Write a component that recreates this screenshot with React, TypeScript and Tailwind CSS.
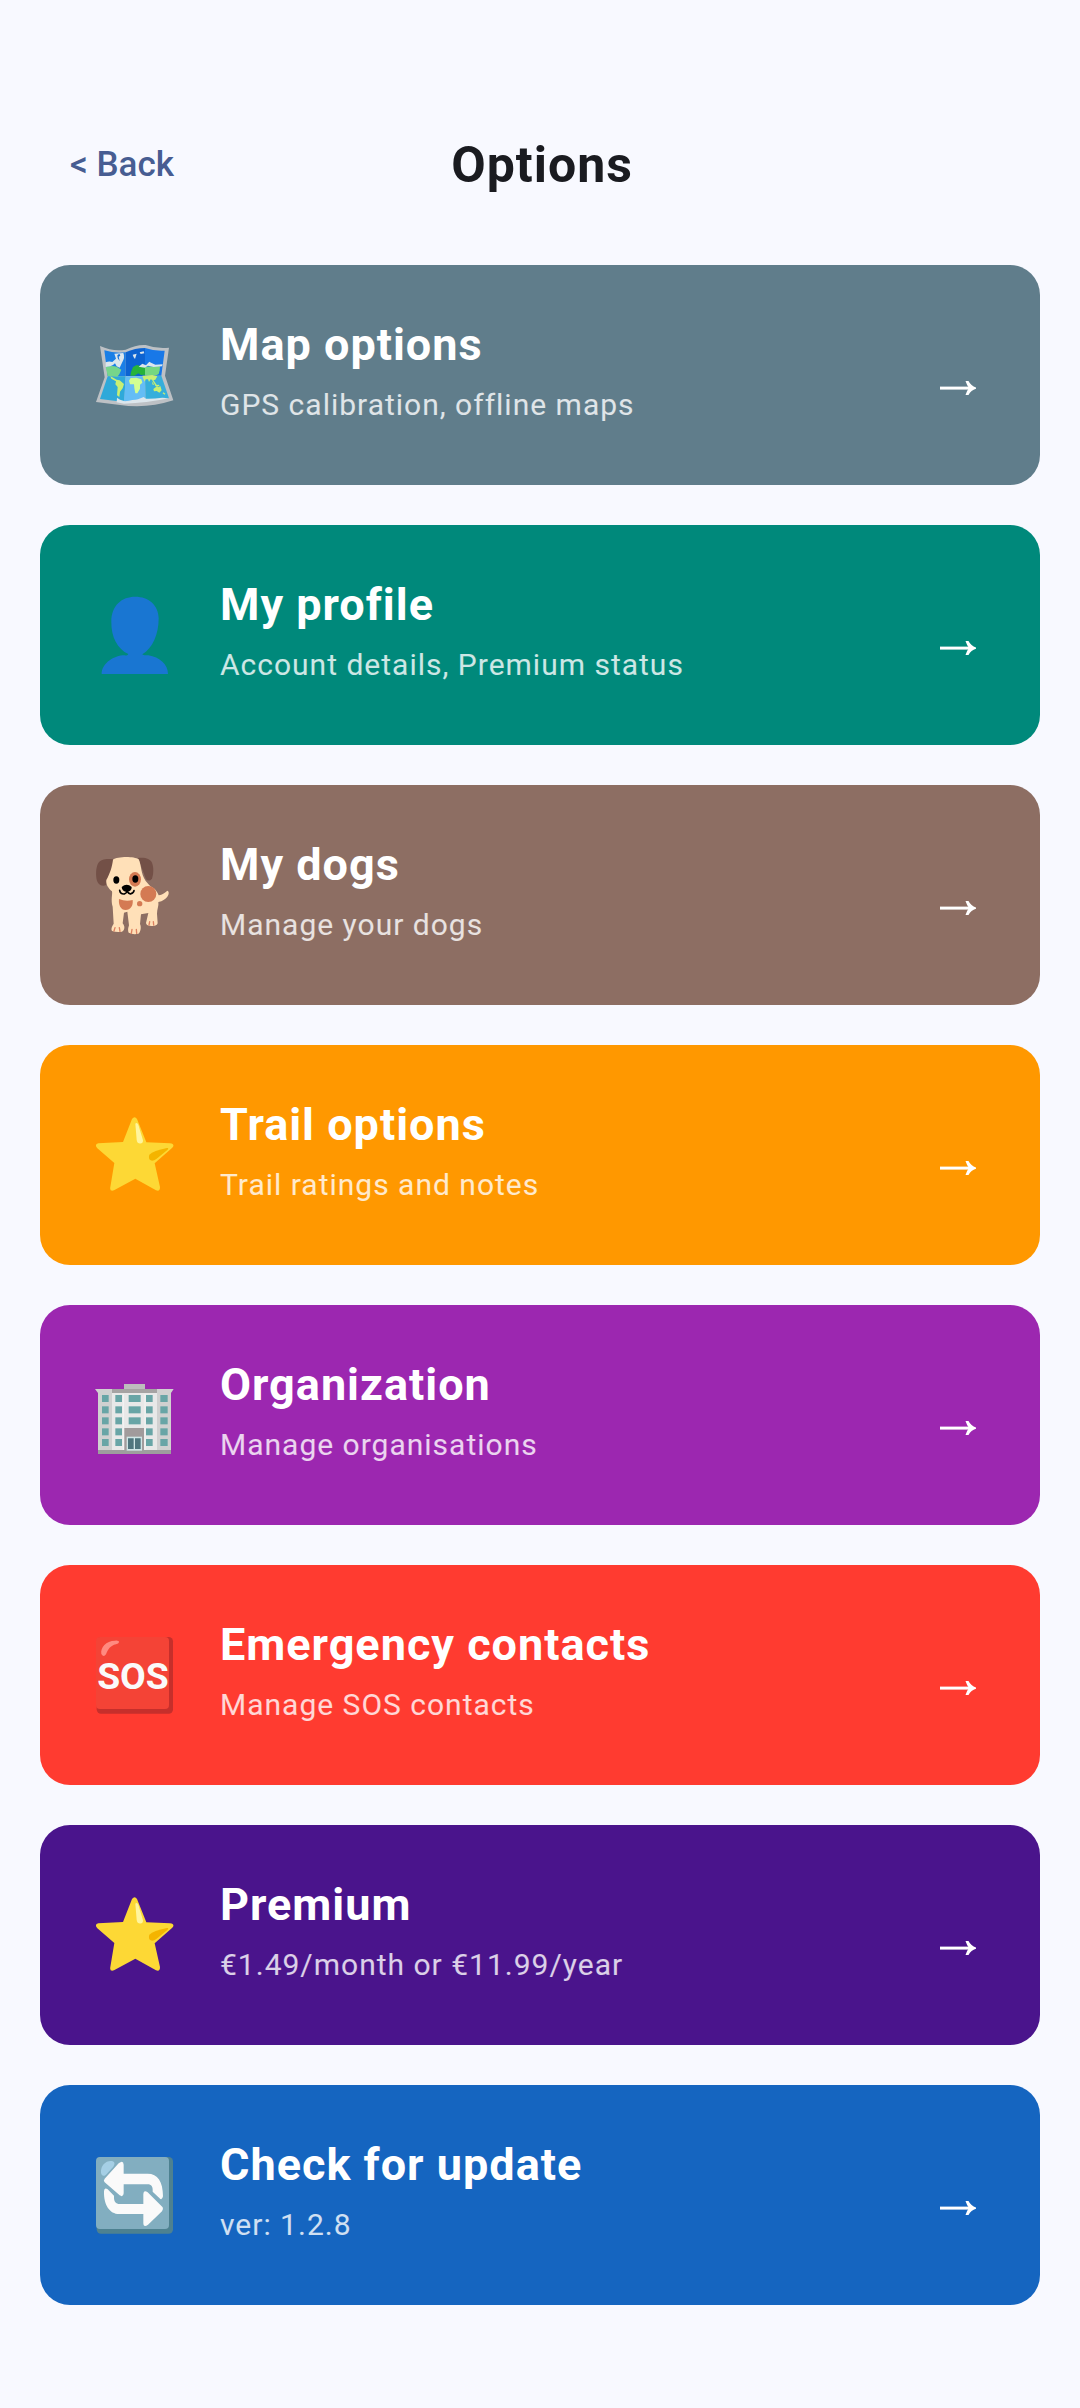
import type { ReactNode } from 'react'

type Option = {
  title: string
  subtitle: string
  color: string
  icon: ReactNode
}

function MapIcon() {
  return (
    <svg viewBox="45 30 240 240" className="size-20" aria-hidden="true">
      <path d="M60 63 Q98 80 137 74 Q170 58 197 60 Q230 72 267 68 L255 152 L280 226 Q200 252 120 240 L48 231 L74 157Z" fill="#bdc1c5" />
      <path d="M73 76 Q105 86 137 82 V154 L83 154Z" fill="#1a7fe6" />
      <path d="M137 82 Q165 69 195 69 V153 H137Z" fill="#0d63d1" />
      <path d="M195 69 Q225 79 254 77 L244 152 H195Z" fill="#1878e8" />
      <path d="M83 154 H137 L133 231 L60 222Z" fill="#2fa9d9" />
      <path d="M137 154 H195 L197 226 Q165 224 132 231Z" fill="#64bdf5" />
      <path d="M195 153 L244 152 L267 220 L197 226Z" fill="#36aedb" />
      <path d="M77 125 Q98 121 110 125 L124 134 L118 148 L112 155 L98 154 L83 153Z" fill="#76d58b" />
      <path d="M77 112 Q88 107 97 111 L108 101 L103 86 L130 84 Q136 97 126 113 L119 128 L110 124 L105 115 L99 120 L91 124 L77 126Z" fill="#dce6ec" />
      <path d="M118 86 L121 92 L116 95 L119 109 L113 99 L112 91Z" fill="#1372db" />
      <path d="M158 89 l12-3 -5 16 -4-5Z M179 82 l12-3 2 6 -11 2Z" fill="#dce6ec" />
      <path d="M153 141 L159 126 L170 120 L187 124 L195 125 V149 L183 150 L175 145 L164 152 L151 152Z" fill="#27b33a" />
      <path d="M195 125 L240 124 L239 136 L236 147 L229 151 L195 150Z" fill="#75d781" />
      <path d="M176 125 L187 116 L198 121 L208 110 L213 113 L226 119 L248 118 L246 124 L221 126 L204 122 L194 128Z" fill="#dce6ec" />
      <path d="M91 154 L100 158 L110 164 L119 166 L132 177 L128 190 L120 200 L118 216 L111 211 L113 186 L106 178 L108 169 L94 161Z" fill="#c8ef73" />
      <path d="M147 167 L152 159 L169 158 L184 163 L187 173 L180 179 L180 191 L172 205 L166 205 L163 189 L162 178 L150 178Z" fill="#d2ff91" />
      <path d="M187 152 L217 150 L232 154 L226 164 L219 166 L212 163 L207 171 L204 163 L197 163 L194 170 L190 161Z M215 169 l8 10 -5 0Z M227 179 l11 2 0 3 -12-1Z M220 192 L231 184 L236 187 L241 183 L245 196 L238 203 L230 198 L222 199Z" fill="#c8ef73" />
      <path d="M218 165 L229 182 L237 181 M249 203 L255 208" fill="none" stroke="#c8ef73" strokeWidth="4" />
      <path d="M111 218 l9 6 15 5 Q160 225 174 223 l17-7 7 5 Q218 222 247 218 L267 220 Q199 234 132 236 L110 232Z" fill="#dce6ec" />
    </svg>
  )
}

function PersonIcon() {
  return (
    <svg viewBox="45 30 240 240" className="size-20" aria-hidden="true">
      <path
        d="M166 35 C205 35 236 60 236 100 C236 148 218 190 187 208 C190 212 197 211 205 211 C239 216 264 239 264 267 H65 C65 239 94 215 128 211 C136 211 142 213 145 207 C113 192 93 156 94 110 C94 61 125 35 166 35Z"
        fill="#1976d2"
      />
    </svg>
  )
}

function DogIcon() {
  return (
    <svg viewBox="45 30 240 240" className="size-20" aria-hidden="true">
      <path d="M99 43 C81 40 62 42 55 54 C47 67 47 93 51 107 C55 120 69 126 78 120 L100 90Z" fill="#735047" />
      <path d="M174 39 C194 36 210 41 216 53 C223 72 219 91 216 101 Q207 111 198 103Z" fill="#735047" />
      <path
        d="M99 44 C111 34 162 33 176 43 C184 58 182 86 197 108 C205 117 209 123 216 127 C228 133 233 144 236 151 C250 150 259 137 263 137 C272 142 262 166 235 171 C237 182 231 193 231 206 L233 235 Q230 244 215 243 Q199 243 198 234 L205 204 L183 208 L180 237 C185 246 181 264 175 266 Q160 270 146 263 Q142 256 147 241 L142 200 L132 203 L128 235 C136 244 134 256 126 260 Q111 263 96 258 Q91 251 101 236 L98 185 C92 165 98 148 96 139 C85 130 77 118 79 105 C91 83 96 66 99 44Z"
        fill="#ffe0b8"
      />
      <ellipse cx="165" cy="103" rx="18" ry="22" fill="#d47a53" />
      <circle cx="205" cy="147" r="24" fill="#d47a53" />
      <circle cx="179" cy="176" r="8" fill="#d47a53" />
      <path d="M117 162 Q137 171 158 165 C160 182 152 195 137 195 C122 195 115 180 117 162Z" fill="#d47a53" />
      <ellipse cx="109" cy="105" rx="9" ry="11" fill="#000000" />
      <ellipse cx="166" cy="102" rx="9" ry="11" fill="#000000" />
      <path d="M125 126 Q140 113 155 126 Q156 138 141 141 Q126 139 125 126Z" fill="#000000" />
      <path d="M119 136 Q121 148 133 147 Q140 144 141 139 Q147 148 153 146 Q161 144 162 137" fill="none" stroke="#000000" strokeWidth="5" strokeLinecap="round" />
      <path d="M105 248 l-3 10 M118 248 l2 11 M156 253 l-2 12 M169 253 l1 12 M209 230 l-2 10 M220 230 l1 10" stroke="#dd8060" strokeWidth="4" strokeLinecap="round" />
    </svg>
  )
}

function StarIcon() {
  return (
    <svg viewBox="45 30 240 240" className="size-20" aria-hidden="true">
      <path
        d="M156 42 Q164 31 171 42 L199 112 L270 115 Q287 118 276 129 L224 175 L240 246 Q240 261 228 256 L166 221 L102 256 Q88 260 91 246 L103 174 L52 130 Q42 118 55 115 L129 111Z"
        fill="#fdd835"
      />
      <path d="M166 56 Q171 51 175 59 L189 106 Q189 118 177 115 Q171 114 170 104Z" fill="#fff59d" />
      <path d="M208 149 Q220 137 261 129 Q268 128 262 135 L230 161 Q216 172 208 163 Q205 156 208 149Z" fill="#f4b400" />
    </svg>
  )
}

function OfficeIcon() {
  const rows = [75, 109, 142, 175, 207]
  return (
    <svg viewBox="45 15 240 240" className="size-20" aria-hidden="true">
      <path d="M132 42 H195 V57 H132Z" fill="#bdbdbd" />
      <path d="M45 57 H281 L273 69 V241 H54 V69Z" fill="#d0d0d0" />
      <path d="M96 69 H231 V240 H96Z" fill="#e8e8e8" />
      <path d="M96 57 H231 V69 H96Z" fill="#a5a3a3" />
      <path d="M130 72 V240 M195 72 V240" stroke="#f5f5f5" strokeWidth="3" />
      {rows.map((y, i) => (
        <g key={y} fill="#68a5a6">
          <rect x="66" y={y} width="20" height="21" />
          <rect x="106" y={y} width="20" height="21" />
          {i < 3 && <rect x="146" y={y} width="36" height="21" />}
          <rect x="198" y={y} width="20" height="21" />
          <rect x="241" y={y} width="22" height="21" />
        </g>
      ))}
      <path d="M133 174 H192 V240 H133Z" fill="#a19b9c" />
      <path d="M54 240 H273 V252 H54Z" fill="#9e9e9e" />
      <path d="M140 200 H186 V242 H140Z" fill="#cfe5e6" />
      <path d="M144 205 H161 V237 H144Z M165 205 H182 V237 H165Z" fill="#4f767e" />
    </svg>
  )
}

function SosIcon() {
  return (
    <svg viewBox="45 30 240 240" className="size-20" aria-hidden="true">
      <rect x="50" y="36" width="229" height="230" rx="13" fill="#c62f2b" />
      <rect x="48" y="36" width="219" height="216" rx="12" fill="#f44336" />
      <path d="M64 87 C61 67 78 47 105 47 Q118 46 117 52 Q116 56 108 58 C91 62 84 73 78 88 Q71 99 64 87Z" fill="#ff8a80" />
      <text x="159" y="193" textAnchor="middle" fontFamily="Roboto, sans-serif" fontSize="112" fontWeight="700" fill="#fafafa">
        SOS
      </text>
    </svg>
  )
}

function RefreshIcon() {
  return (
    <svg viewBox="45 30 240 240" className="size-20" aria-hidden="true">
      <rect x="50" y="36" width="229" height="230" rx="13" fill="#4d8190" />
      <rect x="48" y="36" width="219" height="216" rx="12" fill="#82aec0" />
      <path d="M63 84 C61 60 80 45 98 49 Q108 53 100 65 L78 89 Q66 98 63 84Z" fill="#a5cfe5" />
      <path
        d="M74 101 L116 55 Q130 44 131 59 V86 H203 C233 86 249 109 249 154 Q246 168 238 159 L218 140 C219 125 214 118 203 118 H131 V145 Q130 158 119 151 L74 112 Q69 107 74 101Z"
        fill="#fafafa"
      />
      <path
        d="M248 187 Q251 193 246 199 L204 239 Q190 249 190 233 V207 H118 C88 207 71 178 72 140 Q73 125 83 133 L102 152 C101 169 107 177 120 177 H190 V148 Q191 133 203 142Z"
        fill="#fafafa"
      />
    </svg>
  )
}

function ArrowIcon() {
  return (
    <svg viewBox="0 0 36 14" className="mt-[26px] h-3.5 w-9 shrink-0" aria-hidden="true">
      <path d="M0 5.6 H30 V8.6 H0Z" fill="#ffffff" />
      <path d="M25.5 0 H28.5 Q31 5 36 6.4 V7.8 Q31 9.2 28.5 14 H25.5 Q27 9.5 29 7.1 Q27 4.5 25.5 0Z" fill="#ffffff" />
    </svg>
  )
}

const OPTIONS: Option[] = [
  { title: 'Map options', subtitle: 'GPS calibration, offline maps', color: 'bg-[#607d8b]', icon: <MapIcon /> },
  { title: 'My profile', subtitle: 'Account details, Premium status', color: 'bg-[#00897b]', icon: <PersonIcon /> },
  { title: 'My dogs', subtitle: 'Manage your dogs', color: 'bg-[#8d6e63]', icon: <DogIcon /> },
  { title: 'Trail options', subtitle: 'Trail ratings and notes', color: 'bg-[#ff9800]', icon: <StarIcon /> },
  { title: 'Organization', subtitle: 'Manage organisations', color: 'bg-[#9c27b0]', icon: <OfficeIcon /> },
  { title: 'Emergency contacts', subtitle: 'Manage SOS contacts', color: 'bg-[#ff3b30]', icon: <SosIcon /> },
  { title: 'Premium', subtitle: '€1.49/month or €11.99/year', color: 'bg-[#4a148c]', icon: <StarIcon /> },
  { title: 'Check for update', subtitle: 'ver: 1.2.8', color: 'bg-[#1565c0]', icon: <RefreshIcon /> },
]

function OptionCard({ option }: { option: Option }) {
  return (
    <button type="button" className={`flex h-[220px] w-full items-center rounded-[30px] pr-16 pl-[55px] text-left ${option.color}`}>
      <span className="shrink-0">{option.icon}</span>
      <span className="ml-[45px] flex flex-1 flex-col pb-2.5 tracking-[1px]">
        <span className="text-[45px] leading-[60px] font-bold text-white">{option.title}</span>
        <span className="mt-2.5 text-[30px] leading-[40px] text-white/80">{option.subtitle}</span>
      </span>
      <ArrowIcon />
    </button>
  )
}

export default function App() {
  return (
    <div className="min-h-screen bg-[#f8f9ff] px-10 pt-[115px] pb-10 font-['Roboto',sans-serif]">
      <header className="mb-[50px] flex h-[100px] items-center justify-between">
        <button type="button" className="px-[30px] text-[35px] leading-[50px] font-medium text-[#475d92]">
          &lt; Back
        </button>
        <h1 className="text-[50px] leading-[60px] font-bold tracking-[1px] text-[#1a1b20]">Options</h1>
        <div className="w-40" />
      </header>
      <main className="flex flex-col gap-10">
        {OPTIONS.map(option => (
          <OptionCard key={option.title} option={option} />
        ))}
      </main>
    </div>
  )
}
